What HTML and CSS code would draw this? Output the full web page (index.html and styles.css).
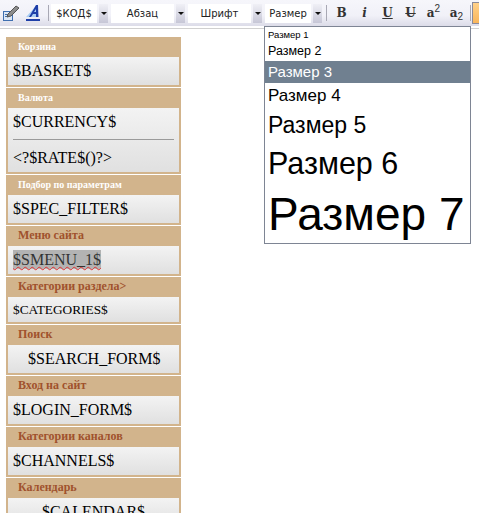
FILE: index.html
```html
<!DOCTYPE html>
<html lang="ru">

<head>
    <meta charset="UTF-8">
    <title>Редактор</title>
    <link rel="stylesheet" href="styles.css">
</head>

<body>
    <div class="toolbar">
        <svg class="tool-icon edit-icon" width="17" height="18" viewBox="0 0 17 18">
            <rect x="0.500" y="7.500" width="9" height="9" fill="#dbe6f5" stroke="#3f6fb0"/>
            <path d="M2 10.500h5M2 12.500h4" stroke="#3f6fb0"/>
            <path d="M5 10l8-8 3 2-8 8-4 1z" fill="#8c8c8c" stroke="#555"/>
        </svg>
        <svg class="tool-icon style-icon" width="15" height="18" viewBox="0 0 15 18">
            <path d="M0 13L10 2v11z" fill="#a9cdf2"/>
            <path d="M3 13h2l2-3h3l0 3h2.500L12 1h-2zM8 8l2-3v3z" fill="#1e3fa8"/>
            <rect x="0" y="15" width="14" height="2" fill="#1e3fa8"/>
        </svg>
        <span class="sep"></span>
        <div class="combo combo-code"><span class="combo-label">$КОД$</span><span class="combo-arrow"></span></div>
        <div class="combo combo-format"><span class="combo-label">Абзац</span><span class="combo-arrow"></span></div>
        <div class="combo combo-font"><span class="combo-label">Шрифт</span><span class="combo-arrow"></span></div>
        <div class="combo combo-size"><span class="combo-label">Размер</span><span class="combo-arrow"></span></div>
        <span class="sep sep-size"></span>
        <div class="format-buttons">
            <span class="fmt fmt-bold">B</span>
            <span class="fmt fmt-italic">i</span>
            <span class="fmt fmt-under">U</span>
            <span class="fmt fmt-strike">U</span>
            <span class="fmt fmt-script">a<sup>2</sup></span>
            <span class="fmt fmt-script">a<sub>2</sub></span>
        </div>
        <span class="sep sep-end"></span>
        <span class="orange-btn"></span>
    </div>

    <ul class="size-menu">
        <li class="size-1">Размер 1</li>
        <li class="size-2">Размер 2</li>
        <li class="size-3 active">Размер 3</li>
        <li class="size-4">Размер 4</li>
        <li class="size-5">Размер 5</li>
        <li class="size-6">Размер 6</li>
        <li class="size-7">Размер 7</li>
    </ul>

    <div class="sidebar">
        <div class="block">
            <h4 class="small-title">Корзина</h4>
            <div class="block-body">$BASKET$</div>
        </div>
        <div class="block">
            <h4 class="small-title">Валюта</h4>
            <div class="block-body">
                $CURRENCY$
                <hr>
                &lt;?$RATE$()?&gt;
            </div>
        </div>
        <div class="block">
            <h4 class="small-title">Подбор по параметрам</h4>
            <div class="block-body">$SPEC_FILTER$</div>
        </div>
        <div class="block">
            <h4>Меню сайта</h4>
            <div class="block-body"><span class="selected">$SMENU_1$</span></div>
        </div>
        <div class="block">
            <h4>Категории раздела&gt;</h4>
            <div class="block-body body-small">$CATEGORIES$</div>
        </div>
        <div class="block">
            <h4>Поиск</h4>
            <div class="block-body body-search">$SEARCH_FORM$</div>
        </div>
        <div class="block">
            <h4>Вход на сайт</h4>
            <div class="block-body">$LOGIN_FORM$</div>
        </div>
        <div class="block">
            <h4>Категории каналов</h4>
            <div class="block-body">$CHANNELS$</div>
        </div>
        <div class="block">
            <h4>Календарь</h4>
            <div class="block-body body-center">$CALENDAR$</div>
        </div>
    </div>
</body>

</html>
```

FILE: styles.css
```css
html, body {
    margin: 0;
    height: 513px;
    overflow: hidden;
    background-color: #fff;
}

body {
    position: relative;
    font-family: "Liberation Serif", serif;
}

.toolbar {
    display: flex;
    align-items: center;
    height: 26px;
    padding-left: 3px;
    background: linear-gradient(#f6f6fb, #f1f1f8 60%, #dcdce8);
    border-bottom: 2px solid #fff;
    box-shadow: 0 1px 0 #d0d0d0;
    font-family: "DejaVu Sans", sans-serif;
    font-size: 10px;
    color: #222;
    overflow: hidden;
}

.tool-icon {
    flex: none;
}

.edit-icon {
    margin-right: 6px;
}

.sep {
    flex: none;
    width: 1px;
    height: 16px;
    margin: 0 2px 0 7px;
    background-color: #a8a8b4;
}

.combo {
    flex: none;
    display: flex;
    gap: 2px;
    height: 19px;
    margin-right: 3px;
}

.combo-label {
    flex: 1;
    line-height: 19px;
    text-align: center;
    background-color: #fff;
}

.combo-arrow {
    position: relative;
    flex: none;
    width: 9px;
    background: linear-gradient(#f0f0f6, #c6c6d6);
}

.combo-arrow::after {
    content: "";
    position: absolute;
    left: 2px;
    top: 8px;
    border: 3px solid transparent;
    border-top-color: #111;
    border-bottom: 0;
}

.combo-code {
    width: 57px;
}

.combo-format {
    width: 74px;
}

.combo-font {
    width: 74px;
}

.combo-size {
    width: 57px;
}

.sep-size {
    margin: 0 0 0 1px;
}

.format-buttons {
    flex: none;
    display: flex;
    padding-left: 3px;
    font-family: "DejaVu Serif", serif;
    font-weight: bold;
    font-size: 12px;
    color: #333;
}

.fmt {
    width: 23px;
    text-align: center;
}

.fmt-italic {
    font-style: italic;
}

.fmt-under {
    text-decoration: underline;
}

.fmt-strike {
    text-decoration: line-through;
}

.fmt-script sup,
.fmt-script sub {
    font-family: "Liberation Sans", sans-serif;
    font-weight: normal;
    font-size: 10px;
    line-height: 0;
}

.sep-end {
    margin: 0 1px 0 2px;
}

.orange-btn {
    flex: none;
    width: 10px;
    height: 22px;
    box-sizing: border-box;
    background: linear-gradient(#ffd18a, #f9b65c);
    border: 1px solid #8a8a9a;
}

.size-menu {
    position: absolute;
    left: 264px;
    top: 26px;
    width: 205px;
    height: 216px;
    margin: 0;
    padding: 0;
    list-style: none;
    background-color: #fff;
    border: 1px solid #7e8594;
    font-family: "Liberation Sans", sans-serif;
    color: #000;
    overflow: hidden;
}

.size-menu li {
    padding-left: 3px;
    white-space: nowrap;
}

.size-1 {
    height: 14px;
    font-size: 9.5px;
    line-height: 15px;
}

.size-2 {
    height: 20px;
    font-size: 12.5px;
    line-height: 20px;
}

.size-3 {
    height: 22px;
    font-size: 15px;
    line-height: 22px;
}

.size-3.active {
    background-color: #708090;
    color: #fff;
}

.size-4 {
    height: 26px;
    font-size: 17px;
    line-height: 26px;
}

.size-5 {
    height: 32px;
    font-size: 23px;
    line-height: 32px;
}

.size-6 {
    height: 44px;
    font-size: 30.5px;
    line-height: 44px;
}

.size-7 {
    height: 58px;
    font-size: 46px;
    line-height: 58px;
}

.sidebar {
    display: flex;
    flex-direction: column;
    gap: 1px;
    width: 175px;
    margin: 9px 0 0 6px;
}

.block {
    background-color: #d2b48c;
    padding: 0 2px 2px;
}

.block h4 {
    height: 20px;
    margin: 0;
    padding-left: 10px;
    font-size: 12px;
    line-height: 19px;
    color: #a0522d;
}

.block h4.small-title {
    font-size: 10px;
    color: #fff;
}

.block-body {
    padding: 0 5px;
    font-size: 16px;
    line-height: 28px;
    color: #000;
    background: linear-gradient(#f3f3f3, #e0e0e0);
}

.block-body hr {
    margin: 3px 0 4px;
    border: 0;
    border-top: 1px solid #9a9a9a;
}

.selected {
    display: inline-block;
    line-height: 19px;
    background-color: #b3b3b3;
    color: #333;
    text-decoration: underline wavy #e03030 1px;
}

.body-small {
    font-size: 13.33px;
    line-height: 25px;
}

.body-search {
    padding-left: 20px;
}

.body-center {
    text-align: center;
}
```
